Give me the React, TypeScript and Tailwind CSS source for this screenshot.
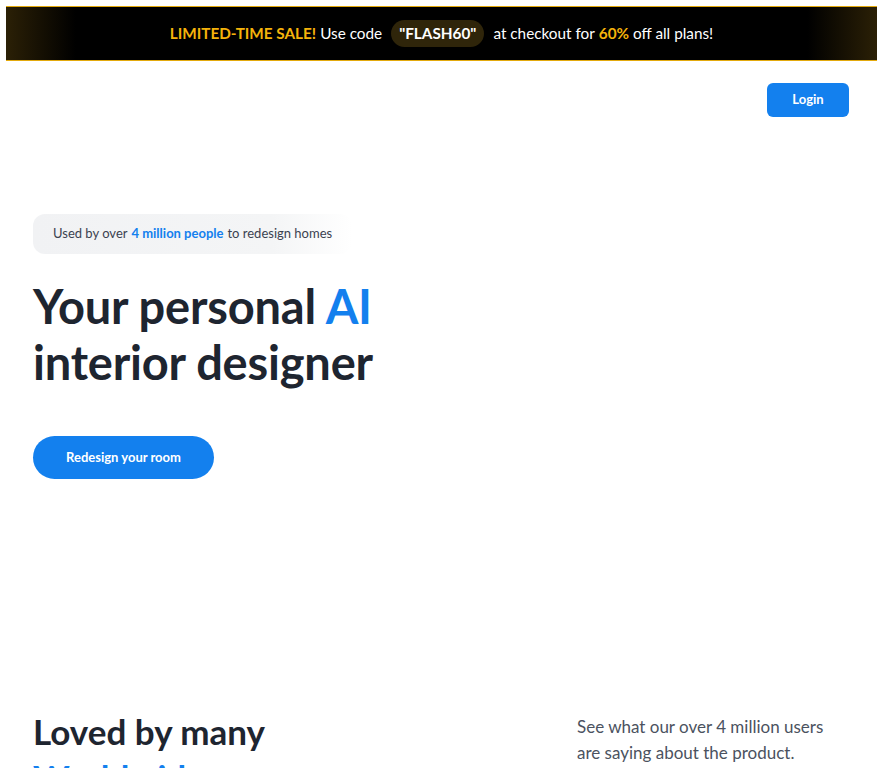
import React from 'react';

const testimonials = [
  { name: 'Sarah M.', role: 'Homeowner', text: 'I redesigned my whole living room in an afternoon. The AI suggestions were spot on and saved me a fortune on a designer.' },
  { name: 'James K.', role: 'Real estate agent', text: 'Staging listings used to take days. Now I can show buyers what a space could look like in minutes.' },
  { name: 'Priya R.', role: 'Renter', text: 'Great for trying out ideas before buying furniture. I finally know what my bedroom should look like.' },
  { name: 'Tom H.', role: 'Interior designer', text: 'A fantastic tool for quick concept boards. My clients love seeing several styles side by side.' },
  { name: 'Elena G.', role: 'Homeowner', text: 'Simple, fast and surprisingly accurate. The kitchen renders convinced my partner to finally remodel.' },
  { name: 'Marcus L.', role: 'Architect', text: 'I use it to explore material palettes early on. It speeds up the first conversations with clients.' },
];

function SaleBanner() {
  return (
    <div className="mt-[6px] ml-[6px] mr-[1px] h-[55px] border-y border-[#e3a90c] bg-[linear-gradient(90deg,#2b2006_0%,#000_8%,#000_92%,#2b2006_100%)] flex items-center justify-center text-[15.3px] text-white">
      <span className="font-bold text-[#f5b30b]">LIMITED-TIME SALE!</span>
      <span className="ml-[4px]">Use code</span>
      <span className="mx-[9px] px-[8px] py-[2px] rounded-full bg-[#2f250a] font-bold">"FLASH60"</span>
      <span>at checkout for</span>
      <span className="ml-[4px] font-bold text-[#f5b30b]">60%</span>
      <span className="ml-[4px]">off all plans!</span>
    </div>
  );
}

export default function App() {
  return (
    <div className="w-[878px] min-h-screen bg-white text-[#1e2530]" style={{ fontFamily: 'Lato, "Noto Sans", sans-serif' }}>
      <SaleBanner />

      <div className="pl-[33px] pr-[29px]">
        <header className="flex justify-end pt-[22px]">
          <button className="w-[82px] h-[34px] rounded-md bg-[#1380ee] text-white text-[13px] font-bold">Login</button>
        </header>

        <section className="pt-[97px] pb-[229px]">
          <div className="inline-flex items-center h-[40px] px-[20px] rounded-xl bg-[linear-gradient(90deg,#f1f2f4_0%,#f4f5f6_75%,#fff_100%)] text-[13px] text-[#3b4250]">
            Used by over <span className="mx-[4px] font-bold text-[#1380ee]">4 million people</span> to redesign homes
          </div>
          <h1 className="mt-[24px] text-[47px] leading-[56px] font-bold tracking-[-0.2px]">
            Your personal <span className="text-[#1380ee]">AI</span>
            <br />
            interior designer
          </h1>
          <button className="mt-[46px] w-[181px] h-[43px] rounded-full bg-[#1380ee] text-white text-[13px] font-bold">
            Redesign your room
          </button>
        </section>

        <section className="pb-[120px]">
          <div className="flex justify-between">
            <h2 className="text-[35px] leading-[46px] font-bold">
              Loved by many
              <br />
              <span className="text-[#1380ee]">Worldwide</span>
            </h2>
            <p className="w-[272px] pt-[6px] text-[17px] leading-[26px] text-[#4b5260]">
              See what our over 4 million users are saying about the product.
            </p>
          </div>

          <div className="mt-[48px] grid grid-cols-2 gap-6">
            {testimonials.map((t) => (
              <div key={t.name} className="rounded-2xl border border-gray-100 bg-gray-50 p-6">
                <p className="text-[15px] leading-[24px] text-[#4b5260]">"{t.text}"</p>
                <div className="mt-4 flex items-center gap-3">
                  <div className="w-9 h-9 rounded-full bg-[#1380ee] text-white text-[13px] font-bold flex items-center justify-center">
                    {t.name[0]}
                  </div>
                  <div>
                    <div className="text-[14px] font-bold">{t.name}</div>
                    <div className="text-[12px] text-gray-500">{t.role}</div>
                  </div>
                </div>
              </div>
            ))}
          </div>
        </section>

        <section className="py-[120px] flex flex-col items-center text-center">
          <h2 className="text-[33px] leading-[44px] font-bold">How it works</h2>
          <div className="mt-[48px] grid grid-cols-3 gap-6 w-full">
            {['Upload a photo', 'Choose a style', 'Get your redesign'].map((s, i) => (
              <div key={s} className="rounded-2xl bg-gray-50 p-8 h-[260px] flex flex-col items-center justify-center">
                <div className="w-10 h-10 rounded-full bg-[#1380ee] text-white font-bold flex items-center justify-center">{i + 1}</div>
                <div className="mt-4 text-[17px] font-bold">{s}</div>
              </div>
            ))}
          </div>
        </section>

        <section className="py-[120px] flex flex-col items-center text-center">
          <h2 className="text-[33px] leading-[44px] font-bold">Ready to transform your space?</h2>
          <button className="mt-[32px] w-[181px] h-[43px] rounded-full bg-[#1380ee] text-white text-[13px] font-bold">
            Redesign your room
          </button>
        </section>

        <footer className="h-[600px] border-t border-gray-100 pt-10 text-[13px] text-gray-500">
          © Interior AI. All rights reserved.
        </footer>
      </div>
    </div>
  );
}
